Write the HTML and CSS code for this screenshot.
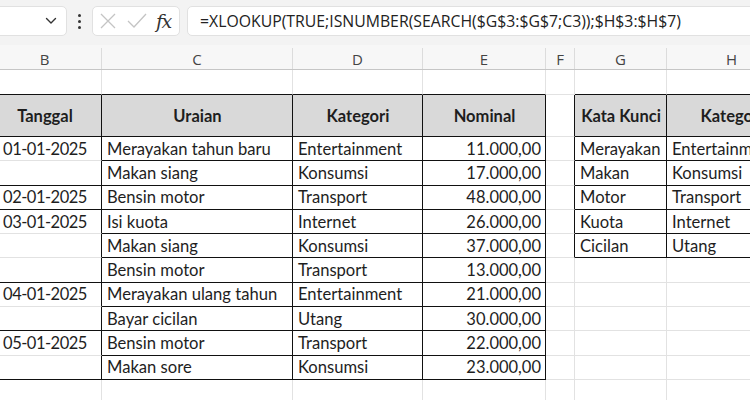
FILE: index.html
```html
<!DOCTYPE html>
<html>
<head>
<meta charset="utf-8">
<link rel="stylesheet" href="styles.css">
</head>
<body>
<div class="app">
  <div class="toolbar">
    <div class="namebox">
      <svg class="chev" width="12" height="8" viewBox="0 0 12 8"><path d="M1.5 1.5 L6 6 L10.5 1.5" fill="none" stroke="#333" stroke-width="1.4" stroke-linecap="round" stroke-linejoin="round"/></svg>
    </div>
    <div class="dots"><span></span><span></span><span></span></div>
    <div class="fxgroup">
      <svg width="20" height="20" viewBox="0 0 20 20"><path d="M3 3 L17 17 M17 3 L3 17" stroke="#c4c4c4" stroke-width="1.3" fill="none"/></svg>
      <svg width="22" height="20" viewBox="0 0 22 20"><path d="M2 10 L8 16 L20 3" stroke="#c4c4c4" stroke-width="1.3" fill="none"/></svg>
      <span class="fx">fx</span>
    </div>
    <div class="formula">=XLOOKUP(TRUE;ISNUMBER(SEARCH($G$3:$G$7;C3));$H$3:$H$7)</div>
  </div>
  <div class="colheads">
    <div class="ch">B</div><div class="ch">C</div><div class="ch">D</div><div class="ch">E</div><div class="ch">F</div><div class="ch">G</div><div class="ch">H</div>
  </div>
  <div class="sheet">
    <!-- row 1 -->
    <div class="c bb"></div><div class="c bb"></div><div class="c bb"></div><div class="c bb"></div><div class="c"></div><div class="c bb"></div><div class="c bb"></div>
    <!-- row 2 header -->
    <div class="c hd br bb">Tanggal</div><div class="c hd br bb">Uraian</div><div class="c hd br bb">Kategori</div><div class="c hd br bb">Nominal</div><div class="c br"></div><div class="c hd br bb">Kata Kunci</div><div class="c hd br bb">Kategori</div>
    <!-- data -->
    <div class="c ctr br">01-01-2025</div><div class="c br bb">Merayakan tahun baru</div><div class="c br bb">Entertainment</div><div class="c num br bb">11.000,00</div><div class="c br"></div><div class="c br bb">Merayakan</div><div class="c br bb">Entertainment</div>
    <div class="c ctr br bb"></div><div class="c br bb">Makan siang</div><div class="c br bb">Konsumsi</div><div class="c num br bb">17.000,00</div><div class="c br"></div><div class="c br bb">Makan</div><div class="c br bb">Konsumsi</div>
    <div class="c ctr br bb">02-01-2025</div><div class="c br bb">Bensin motor</div><div class="c br bb">Transport</div><div class="c num br bb">48.000,00</div><div class="c br"></div><div class="c br bb">Motor</div><div class="c br bb">Transport</div>
    <div class="c ctr br">03-01-2025</div><div class="c br bb">Isi kuota</div><div class="c br bb">Internet</div><div class="c num br bb">26.000,00</div><div class="c br"></div><div class="c br bb">Kuota</div><div class="c br bb">Internet</div>
    <div class="c ctr br"></div><div class="c br bb">Makan siang</div><div class="c br bb">Konsumsi</div><div class="c num br bb">37.000,00</div><div class="c br"></div><div class="c br bb">Cicilan</div><div class="c br bb">Utang</div>
    <div class="c ctr br bb"></div><div class="c br bb">Bensin motor</div><div class="c br bb">Transport</div><div class="c num br bb">13.000,00</div><div class="c"></div><div class="c"></div><div class="c"></div>
    <div class="c ctr br">04-01-2025</div><div class="c br bb">Merayakan ulang tahun</div><div class="c br bb">Entertainment</div><div class="c num br bb">21.000,00</div><div class="c"></div><div class="c"></div><div class="c"></div>
    <div class="c ctr br bb"></div><div class="c br bb">Bayar cicilan</div><div class="c br bb">Utang</div><div class="c num br bb">30.000,00</div><div class="c"></div><div class="c"></div><div class="c"></div>
    <div class="c ctr br">05-01-2025</div><div class="c br bb">Bensin motor</div><div class="c br bb">Transport</div><div class="c num br bb">22.000,00</div><div class="c"></div><div class="c"></div><div class="c"></div>
    <div class="c ctr br bb"></div><div class="c br bb">Makan sore</div><div class="c br bb">Konsumsi</div><div class="c num br bb">23.000,00</div><div class="c"></div><div class="c"></div><div class="c"></div>
    <!-- row after -->
    <div class="c"></div><div class="c"></div><div class="c"></div><div class="c"></div><div class="c"></div><div class="c"></div><div class="c"></div>
  </div>
</div>
</body>
</html>
```

FILE: styles.css
```css
html, body {
  margin: 0;
  padding: 0;
  background: #ffffff;
}
.app {
  width: 750px;
  height: 400px;
  overflow: hidden;
  position: relative;
  background: #ffffff;
}
.toolbar {
  height: 45px;
  background: #f3f3f3;
  display: flex;
  align-items: flex-start;
  padding-top: 6px;
  box-sizing: border-box;
}
.namebox {
  width: 78px;
  height: 30px;
  margin-left: -11px;
  box-sizing: border-box;
  background: #ffffff;
  border: 1px solid #e1e1e1;
  border-radius: 5px;
  display: flex;
  align-items: center;
  justify-content: flex-end;
  padding-right: 9px;
}
.chev { display: block; }
.dots {
  width: 25px;
  height: 30px;
  display: flex;
  flex-direction: column;
  align-items: center;
  justify-content: center;
  gap: 3px;
}
.dots span {
  width: 3px;
  height: 3px;
  border-radius: 50%;
  background: #333;
}
.fxgroup {
  width: 88px;
  height: 30px;
  box-sizing: border-box;
  background: #ffffff;
  border: 1px solid #e1e1e1;
  border-radius: 5px;
  display: flex;
  align-items: center;
  padding-left: 5px;
  gap: 8px;
}
.fx {
  font-family: "DejaVu Serif", "Liberation Serif", serif;
  font-style: italic;
  font-size: 19px;
  color: #333;
  margin-left: 0;
  letter-spacing: -1.5px;
  line-height: 1;
}
.formula {
  margin-left: 7px;
  flex: 1;
  margin-right: -40px;
  height: 30px;
  box-sizing: border-box;
  background: #ffffff;
  border: 1px solid #e1e1e1;
  border-radius: 5px;
  display: flex;
  align-items: center;
  padding-left: 12px;
  font-family: "Open Sans", "Noto Sans", sans-serif;
  font-size: 15.8px;
  color: #222;
  white-space: nowrap;
}
.colheads, .sheet {
  display: grid;
  grid-template-columns: 114px 191px 130px 123px 29px 92px 130px;
  margin-left: -12px;
}
.colheads {
  height: 24px;
  background: #f7f7f7;
  border-bottom: 1px solid #c6c6c6;
}
.ch {
  border-right: 1px solid #dcdcdc;
  display: flex;
  align-items: center;
  justify-content: center;
  font-family: "Open Sans", "Noto Sans", sans-serif;
  font-size: 15px;
  color: #444;
  margin-top: 3px;
}
.sheet {
  grid-template-rows: 25px 42px repeat(10, 24.3px) 40px;
}
.c {
  box-sizing: border-box;
  border-right: 1px solid #e2e2e2;
  border-bottom: 1px solid #e2e2e2;
  font-family: Lato, "Noto Sans", sans-serif;
  font-size: 16.6px;
  color: #1e1e1e;
  display: flex;
  align-items: center;
  padding: 0 4px 0 5px;
  white-space: nowrap;
  overflow: hidden;
}
.br { border-right-color: #111; }
.bb { border-bottom-color: #111; }
.hd {
  background: #d9d9d9;
  font-weight: bold;
  font-size: 16.5px;
  justify-content: center;
}
.ctr {
  justify-content: center;
  font-size: 16.5px;
  letter-spacing: -0.5px;
}
.num {
  justify-content: flex-end;
  font-size: 16.5px;
}
```
